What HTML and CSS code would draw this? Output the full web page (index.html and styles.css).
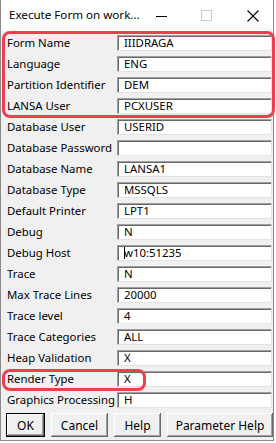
FILE: index.html
```html
<!DOCTYPE html>
<html>
<head>
<meta charset="utf-8">
<link rel="stylesheet" href="styles.css">
</head>
<body>
<div class="window">
  <div class="titlebar">
    <span class="title">Execute Form on work...</span>
    <div class="controls">
      <span class="ctl min"><svg width="12" height="12" viewBox="0 0 12 12"><line x1="0" y1="6.5" x2="11" y2="6.5" stroke="#000" stroke-width="1"/></svg></span>
      <span class="ctl max"><svg width="12" height="12" viewBox="0 0 12 12"><rect x="0.5" y="0.5" width="10" height="10" fill="none" stroke="#c8c8c8" stroke-width="1"/></svg></span>
      <span class="ctl close"><svg width="12" height="12" viewBox="0 0 12 12"><path d="M0.5 0.5 L11.5 11.5 M11.5 0.5 L0.5 11.5" stroke="#000" stroke-width="1.1"/></svg></span>
    </div>
  </div>
  <div class="client">
    <div class="form">
      <label>Form Name</label><div class="edit">IIIDRAGA</div>
      <label>Language</label><div class="edit">ENG</div>
      <label>Partition Identifier</label><div class="edit">DEM</div>
      <label>LANSA User</label><div class="edit">PCXUSER</div>
      <label>Database User</label><div class="edit">USERID</div>
      <label>Database Password</label><div class="edit"></div>
      <label>Database Name</label><div class="edit">LANSA1</div>
      <label>Database Type</label><div class="edit">MSSQLS</div>
      <label>Default Printer</label><div class="edit">LPT1</div>
      <label>Debug</label><div class="edit">N</div>
      <label>Debug Host</label><div class="edit"><span class="caret"></span>w10:51235</div>
      <label>Trace</label><div class="edit">N</div>
      <label>Max Trace Lines</label><div class="edit">20000</div>
      <label>Trace level</label><div class="edit">4</div>
      <label>Trace Categories</label><div class="edit">ALL</div>
      <label>Heap Validation</label><div class="edit">X</div>
      <label>Render Type</label><div class="edit">X</div>
      <label>Graphics Processing</label><div class="edit">H</div>
    </div>
    <div class="buttons">
      <button class="btn default">OK</button>
      <button class="btn">Cancel</button>
      <button class="btn">Help</button>
      <button class="btn wide">Parameter Help</button>
    </div>
    <div class="hl hl-top"></div>
    <div class="hl hl-render"></div>
  </div>
</div>
</body>
</html>
```
FILE: styles.css
```css
* { box-sizing: border-box; }
html, body { margin: 0; padding: 0; }
body {
  width: 276px;
  height: 443px;
  background: #ffffff;
  font-family: "Noto Sans", "Open Sans", sans-serif;
  font-size: 11.4px;
  color: #000;
  overflow: hidden;
}
.window {
  width: 274px;
  height: 441px;
  border-right: 1px solid #8a8a8a;
  border-bottom: 1px solid #8a8a8a;
  border-left: 1px solid #8a8a8a;
  background: #f0f0f0;
  display: flex;
  flex-direction: column;
}
.titlebar {
  height: 31px;
  flex-shrink: 0;
  background: #ffffff;
  display: flex;
  align-items: center;
  justify-content: space-between;
  padding-left: 8px;
}
.title {
  font-size: 11.6px;
  white-space: nowrap;
  padding-bottom: 2px;
}
.controls {
  display: flex;
  align-items: center;
  flex-shrink: 0;
}
.ctl {
  width: 45px;
  height: 30px;
  display: flex;
  align-items: center;
  justify-content: center;
}
.ctl.close { width: 46px; }
.client {
  position: relative;
  flex: 1;
  padding: 4px 0 0 0;
}
.form {
  display: grid;
  grid-template-columns: 116px 155px;
  grid-auto-rows: 16px;
  row-gap: 5px;
}
.form label {
  padding-left: 6px;
  line-height: 16px;
  white-space: nowrap;
}
.edit {
  background: #fff;
  border-top: 1px solid #a0a0a0;
  border-left: 1px solid #a0a0a0;
  border-right: 1px solid #e3e3e3;
  border-bottom: 1px solid #e3e3e3;
  box-shadow: inset 1px 1px 0 #696969;
  padding-left: 6px;
  line-height: 14px;
  white-space: nowrap;
  display: flex;
  align-items: center;
}
.caret {
  width: 1px;
  height: 12px;
  background: #000;
  margin-right: -1px;
}
.buttons {
  display: flex;
  gap: 6px;
  padding: 5px 0 0 5px;
}
.btn {
  font-family: inherit;
  font-size: 12px;
  height: 24px;
  background: #f0f0f0;
  border: none;
  box-shadow: inset -1px -1px 0 #696969, inset 1px 1px 0 #ffffff, inset -2px -2px 0 #a0a0a0;
  padding: 0;
  color: #000;
}
.btn.default {
  width: 39px;
  border: 1px solid #000;
}
.btn:nth-child(2) { width: 57px; }
.btn:nth-child(3) { width: 47px; }
.btn.wide { width: 106px; }
.hl {
  position: absolute;
  border: 3px solid #ee3f4c;
  border-radius: 8px;
  pointer-events: none;
}
.hl-top {
  left: 1px;
  top: 0px;
  width: 273px;
  height: 87px;
}
.hl-render {
  left: 1px;
  top: 338px;
  width: 144px;
  height: 22px;
}
```
